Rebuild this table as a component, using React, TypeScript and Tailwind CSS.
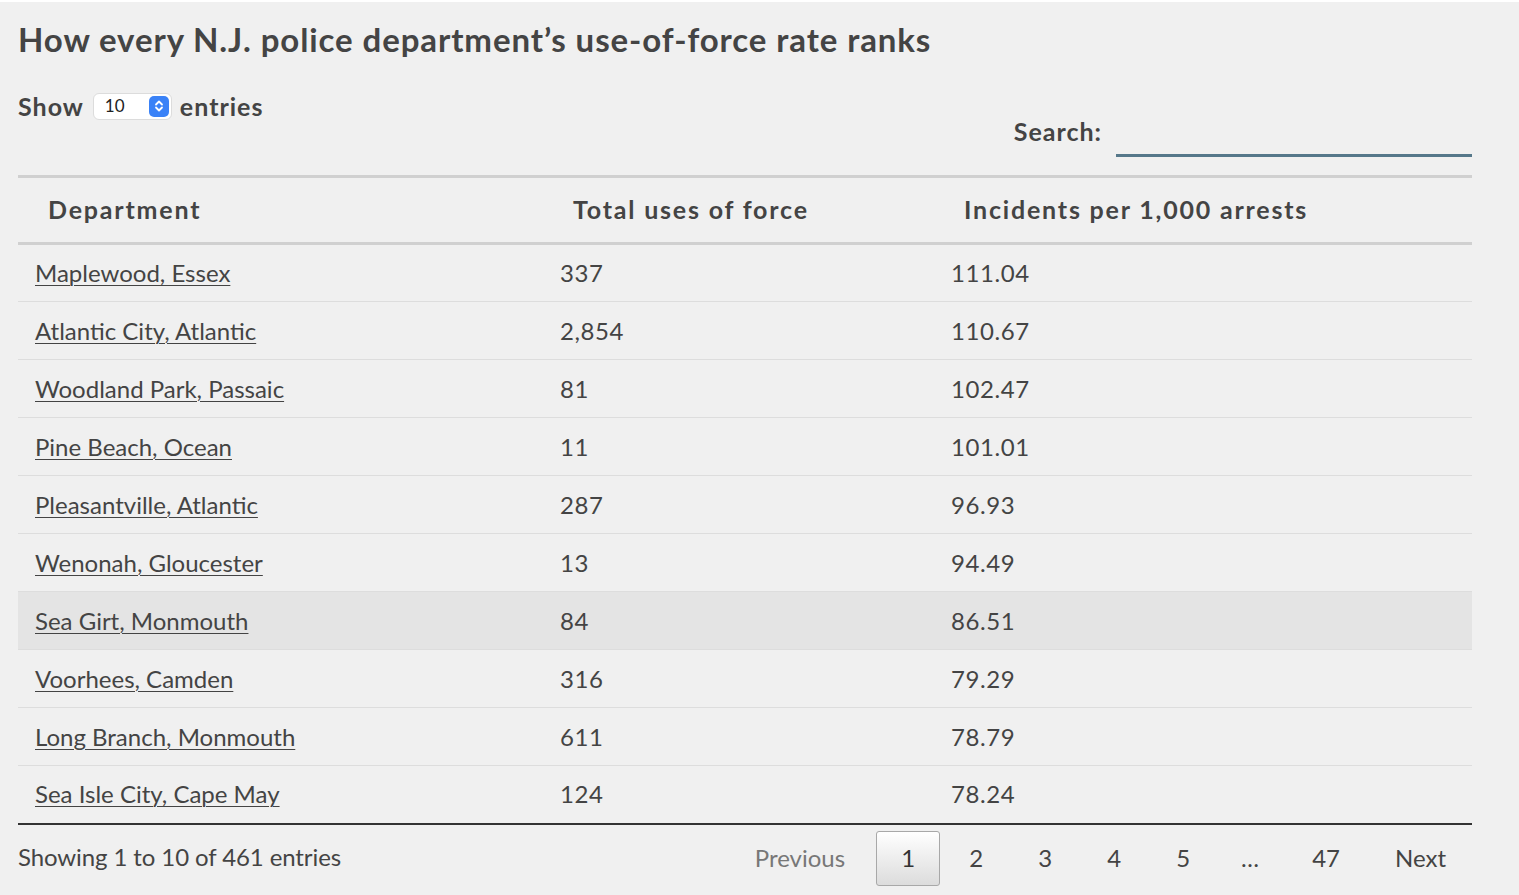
const rows = [
  ["Maplewood, Essex", "337", "111.04"],
  ["Atlantic City, Atlantic", "2,854", "110.67"],
  ["Woodland Park, Passaic", "81", "102.47"],
  ["Pine Beach, Ocean", "11", "101.01"],
  ["Pleasantville, Atlantic", "287", "96.93"],
  ["Wenonah, Gloucester", "13", "94.49"],
  ["Sea Girt, Monmouth", "84", "86.51"],
  ["Voorhees, Camden", "316", "79.29"],
  ["Long Branch, Monmouth", "611", "78.79"],
  ["Sea Isle City, Cape May", "124", "78.24"],
];

const Stepper = () => (
  <span className="flex h-[21px] w-[20px] items-center justify-center rounded-[5px] bg-[#3a82f7]">
    <svg width="10" height="14" viewBox="0 0 10 14" fill="none" stroke="white" strokeWidth="1.8" strokeLinecap="round" strokeLinejoin="round">
      <path d="M2 5.5 L5 2.5 L8 5.5" />
      <path d="M2 8.5 L5 11.5 L8 8.5" />
    </svg>
  </span>
);

export default function App() {
  return (
    <div className="min-h-[895px] border-t-2 border-white bg-[#f0f0f0] px-[18px] pt-[18px] font-['Lato','Liberation_Sans',sans-serif] text-[#444]">
      <div className="w-[1454px]">
        <h1 className="text-[33px] font-bold leading-[38px] tracking-[0.9px]">
          How every N.J. police department’s use-of-force rate ranks
        </h1>

        <div className="flex items-start justify-between">
          <div className="mt-[33px] flex items-center text-[25px] font-bold leading-[30px] tracking-[1px]">
            <span>Show</span>
            <span className="ml-[9px] mr-[8px] flex h-[27px] w-[79px] items-center justify-between rounded-[6px] border border-[#dcdcdc] bg-white pl-[11px] pr-[2px] text-[17px] font-normal tracking-normal text-[#222]">
              10
              <Stepper />
            </span>
            <span>entries</span>
          </div>

          <div className="mt-[54px] flex items-start">
            <span className="mr-[14px] mt-[4px] text-[25px] font-bold leading-[30px] tracking-[1px]">Search:</span>
            <input
              type="text"
              className="h-[45px] w-[356px] border-b-[3px] border-[#56788a] bg-transparent outline-none"
            />
          </div>
        </div>

        <table className="mt-[18px] w-full table-fixed border-collapse">
          <colgroup>
            <col className="w-[525px]" />
            <col className="w-[391px]" />
            <col />
          </colgroup>
          <thead>
            <tr className="border-y-[3px] border-[#d0d0d0] text-left text-[25px] font-bold tracking-[1.8px]">
              <th className="h-[67px] pl-[30px] font-bold">Department</th>
              <th className="pl-[30px] font-bold">Total uses of force</th>
              <th className="pl-[30px] font-bold">Incidents per 1,000 arrests</th>
            </tr>
          </thead>
          <tbody className="text-[24px]">
            {rows.map((r, i) => (
              <tr
                key={r[0]}
                className={`h-[58px] ${i < rows.length - 1 ? "border-b border-[#dddddd]" : "border-b-2 border-[#333]"} ${i === 6 ? "bg-[#e4e4e4]" : ""}`}
              >
                <td className="pl-[17px]">
                  <a href="#" className="underline decoration-1 underline-offset-[3px]">
                    {r[0]}
                  </a>
                </td>
                <td className="pl-[17px] tracking-[0.6px]">{r[1]}</td>
                <td className="pl-[17px] tracking-[0.6px]">{r[2]}</td>
              </tr>
            ))}
          </tbody>
        </table>

        <div className="mt-[6px] flex items-start justify-between">
          <div className="mt-[8px] text-[24px] tracking-[-0.1px]">Showing 1 to 10 of 461 entries</div>
          <div className="mr-[26px] flex items-center text-[24px]">
            <span className="mr-[31px] text-[#777]">Previous</span>
            <span className="flex h-[55px] w-[64px] items-center justify-center rounded-[3px] border border-[#a8a8a8] bg-gradient-to-b from-white to-[#dcdcdc] text-[#333]">
              1
            </span>
            <span className="ml-[26px] w-[20px] text-center">2</span>
            <span className="ml-[49px] w-[20px] text-center">3</span>
            <span className="ml-[49px] w-[20px] text-center">4</span>
            <span className="ml-[49px] w-[20px] text-center">5</span>
            <span className="ml-[47px] w-[20px] text-center">…</span>
            <span className="ml-[52px]">47</span>
            <span className="ml-[55px]">Next</span>
          </div>
        </div>
      </div>
    </div>
  );
}
